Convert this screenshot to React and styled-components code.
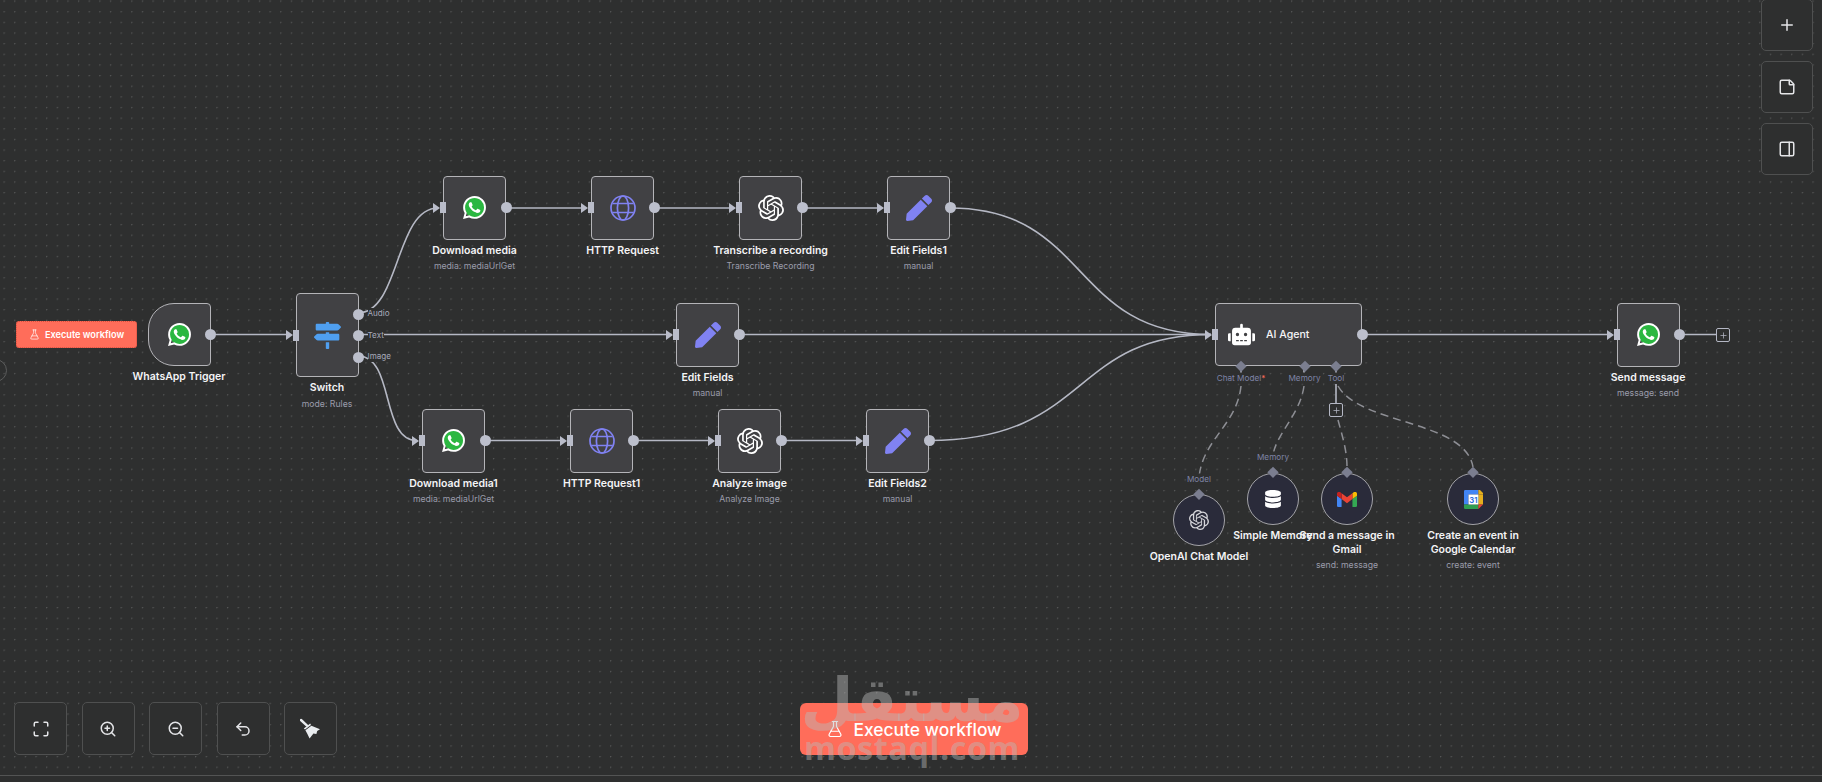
import React from 'react';
import styled, { createGlobalStyle } from 'styled-components';
import { FlaskConical, Plus, StickyNote, PanelRight, Maximize, ZoomIn, ZoomOut, Undo2 } from 'lucide-react';
import { FaMapSigns, FaPen, FaRobot, FaDatabase } from 'react-icons/fa';
import { SiOpenai } from 'react-icons/si';

const Global = createGlobalStyle`
  html, body { margin: 0; height: 100%; background: #2e2f2f; overflow: hidden; }
  body { font-family: Inter, "Liberation Sans", sans-serif; }
  #root { height: 100%; }
`;

const Page = styled.div`
  height: 782px;
  display: flex;
  flex-direction: column;
`;
const Canvas = styled.main`
  position: relative;
  height: 775px;
  flex: none;
  overflow: hidden;
  border-bottom: 1px solid #535454;
  background-color: #2e2f2f;
  background-image: radial-gradient(circle at 0.6px 0.6px, #565757 0.6px, transparent 1px);
  background-size: 10.65px 10.65px;
  background-position: 3.5px 0.5px;
`;
const Edges = styled.svg`
  position: absolute;
  inset: 0;
  width: 100%;
  height: 100%;
  fill: none;
`;
const NodeWrap = styled.div`
  position: absolute;
  left: ${p => p.$x}px;
  top: ${p => p.$y}px;
  width: ${p => p.$w}px;
  display: flex;
  flex-direction: column;
  align-items: center;
`;
const Box = styled.div`
  position: relative;
  box-sizing: border-box;
  flex: none;
  width: ${p => p.$w}px;
  height: ${p => p.$h}px;
  background: #414144;
  border: 1.5px solid #b4b4b8;
  border-radius: ${p => (p.$trigger ? '26px 4px 4px 26px' : '4px')};
  display: flex;
  align-items: center;
  justify-content: ${p => (p.$agent ? 'flex-start' : 'center')};
  padding-left: ${p => (p.$agent ? 12 : 0)}px;
  gap: 11px;
`;
const Round = styled.div`
  position: relative;
  box-sizing: border-box;
  flex: none;
  width: 52px;
  height: 52px;
  background: #2a2b3a;
  border: 1.5px solid #a3a3a8;
  border-radius: 50%;
  display: flex;
  align-items: center;
  justify-content: center;
`;
const Title = styled.div`
  margin-top: ${p => p.$gap ?? 4}px;
  width: ${p => (p.$wrap ? `${p.$wrap}px` : 'max-content')};
  font-size: 10.5px;
  line-height: 13.5px;
  font-weight: 600;
  color: #f4f4f6;
  text-align: center;
`;
const Sub = styled.div`
  margin-top: 3px;
  white-space: nowrap;
  font-size: 8.7px;
  line-height: 12px;
  color: #9a9cab;
`;
const AgentName = styled.span`
  font-size: 10.6px;
  font-weight: 500;
  color: #f4f4f6;
`;
const OutPort = styled.span`
  position: absolute;
  right: -6.5px;
  top: ${p => p.$top ?? 'calc(50% - 5.5px)'};
  width: 11px;
  height: 11px;
  border-radius: 50%;
  background: #bcbfcc;
`;
const InPort = styled.span`
  position: absolute;
  left: -4px;
  top: calc(50% - 5.5px);
  width: 6px;
  height: 11px;
  background: #b9bcc9;
  &::before {
    content: '';
    position: absolute;
    left: -7px;
    top: 0.5px;
    border-left: 7px solid #b9bcc9;
    border-top: 5px solid transparent;
    border-bottom: 5px solid transparent;
  }
`;
const PortLabel = styled.span`
  position: absolute;
  left: 71px;
  top: ${p => p.$top}px;
  font-size: 8.1px;
  line-height: 11px;
  color: #a7aabb;
  white-space: nowrap;
  background: #2e2f2f;
`;
const Diamond = styled.span`
  position: absolute;
  left: ${p => p.$x}px;
  top: ${p => p.$y}px;
  width: 7.5px;
  height: 7.5px;
  transform: translate(-50%, -50%) rotate(45deg);
  background: #7b7e90;
`;
const SlotLabel = styled.span`
  position: absolute;
  left: ${p => p.$x}px;
  top: ${p => p.$y}px;
  transform: translate(-50%, -50%);
  font-size: 8.2px;
  line-height: 11px;
  color: #7f84a6;
  white-space: nowrap;
  background: #2e2f2f;
`;
const Star = styled.span`
  color: #ff6d5a;
`;
const AddBox = styled.span`
  position: absolute;
  left: ${p => p.$x}px;
  top: ${p => p.$y}px;
  box-sizing: border-box;
  width: 14px;
  height: 14px;
  border: 1.2px solid #b4b7c4;
  border-radius: 2px;
  background: #2e2f2f;
  color: #b4b7c4;
  display: flex;
  align-items: center;
  justify-content: center;
`;
const ExecuteSmall = styled.button`
  position: absolute;
  left: 16px;
  top: 321px;
  width: 121px;
  height: 27px;
  padding: 0;
  border: 1px dotted #d9503f;
  border-radius: 3px;
  background: #ff6d5a;
  color: #fff;
  font: 600 9.2px Inter, sans-serif;
  display: flex;
  align-items: center;
  justify-content: center;
  gap: 5px;
`;
const SideToggle = styled.span`
  position: absolute;
  left: -16px;
  top: 359px;
  width: 21px;
  height: 21px;
  border: 1px solid #5b5c5c;
  border-radius: 50%;
`;
const Rail = styled.div`
  position: absolute;
  right: 9px;
  top: -1px;
  display: flex;
  flex-direction: column;
  gap: 10px;
`;
const Tools = styled.div`
  position: absolute;
  left: 14px;
  top: 702px;
  display: flex;
  gap: 14.5px;
`;
const ToolButton = styled.button`
  box-sizing: border-box;
  width: ${p => p.$w || 53}px;
  height: ${p => p.$h || 53}px;
  padding: 0;
  border: 1px solid #4f5050;
  border-radius: 5px;
  background: #2e2f2f;
  color: #e4e5e8;
  display: flex;
  align-items: center;
  justify-content: center;
`;
const ExecuteLarge = styled.button`
  position: absolute;
  left: 800px;
  top: 703px;
  width: 228px;
  height: 52px;
  padding: 0;
  border: none;
  border-radius: 6px;
  background: #ff6d5a;
  color: #fff;
  font: 500 17.4px Inter, sans-serif;
  display: flex;
  align-items: center;
  justify-content: center;
  gap: 9px;
`;
const Watermark = styled.div`
  position: absolute;
  left: 805px;
  top: 665px;
  width: 214px;
  display: flex;
  flex-direction: column;
  align-items: center;
  color: rgba(185, 185, 185, 0.46);
  pointer-events: none;
`;
const WatermarkArabic = styled.div`
  font: 700 61px/70px "DejaVu Sans", sans-serif;
  direction: rtl;
  white-space: nowrap;
`;
const WatermarkLatin = styled.div`
  margin-top: -4px;
  font: 700 32.5px/34px "Open Sans", sans-serif;
  letter-spacing: 0.5px;
`;
const Footer = styled.div`
  flex: 1;
  background: #2e2f2f;
`;

const WhatsApp = ({ size = 23 }) => (
  <svg width={size} height={size} viewBox="0 0 24 24">
    <circle cx="12" cy="12" r="10.4" fill="#2bb741" />
    <path fill="#fff" d="M17.472 14.382c-.297-.149-1.758-.867-2.03-.967-.273-.099-.471-.148-.67.15-.197.297-.767.966-.94 1.164-.173.199-.347.223-.644.075-.297-.15-1.255-.463-2.39-1.475-.883-.788-1.48-1.761-1.653-2.059-.173-.297-.018-.458.13-.606.134-.133.298-.347.446-.52.149-.174.198-.298.298-.497.099-.198.05-.371-.025-.52-.075-.149-.669-1.612-.916-2.207-.242-.579-.487-.5-.669-.51-.173-.008-.371-.01-.57-.01-.198 0-.52.074-.792.372-.272.297-1.04 1.016-1.04 2.479 0 1.462 1.065 2.875 1.213 3.074.149.198 2.096 3.2 5.077 4.487.709.306 1.262.489 1.694.625.712.227 1.36.195 1.871.118.571-.085 1.758-.719 2.006-1.413.248-.694.248-1.289.173-1.413-.074-.124-.272-.198-.57-.347m-5.421 7.403h-.004a9.87 9.87 0 01-5.031-1.378l-.361-.214-3.741.982.998-3.648-.235-.374a9.86 9.86 0 01-1.51-5.26c.001-5.45 4.436-9.884 9.888-9.884 2.64 0 5.122 1.03 6.988 2.898a9.825 9.825 0 012.893 6.994c-.003 5.45-4.437 9.884-9.885 9.884m8.413-18.297A11.815 11.815 0 0012.05 0C5.495 0 .16 5.335.157 11.892c0 2.096.547 4.142 1.588 5.945L.057 24l6.305-1.654a11.882 11.882 0 005.683 1.448h.005c6.554 0 11.89-5.335 11.893-11.893a11.821 11.821 0 00-3.48-8.413z" />
  </svg>
);
const Globe = () => (
  <svg width="26" height="26" viewBox="0 0 26 26" fill="none" stroke="#8082f2" strokeWidth="1.7">
    <circle cx="13" cy="13" r="12" />
    <ellipse cx="13" cy="13" rx="5.6" ry="12" />
    <path d="M2.5 8.5h21M2.5 17.5h21" />
  </svg>
);
const Gmail = () => (
  <svg width="20" height="15" viewBox="0 0 24 18">
    <path fill="#4285f4" d="M1.6 18H5.5V8.5L0 4.4v12A1.6 1.6 0 0 0 1.6 18z" />
    <path fill="#34a853" d="M18.5 18h3.9a1.6 1.6 0 0 0 1.6-1.6v-12l-5.5 4.1z" />
    <path fill="#fbbc04" d="M18.5 1.4v7.1L24 4.4V2.2c0-2-2.3-3.2-3.9-2z" />
    <path fill="#ea4335" d="M5.5 8.5V1.4L12 6.3l6.5-4.9v7.1L12 13.4z" />
    <path fill="#c5221f" d="M0 2.2v2.2l5.5 4.1V1.4L3.9.2C2.3-1 0 .2 0 2.2z" />
  </svg>
);
const GCal = () => (
  <svg width="19" height="19" viewBox="0 0 19 19">
    <path fill="#4285f4" d="M1.2 0H14.4V4.5H4.5V14.5H0V1.2A1.2 1.2 0 0 1 1.2 0z" />
    <rect x="14.4" y="4.5" width="4.6" height="10" fill="#e6ae1e" />
    <path fill="#2f9e50" d="M0 14.5H14.4V19H1.2A1.2 1.2 0 0 1 0 17.8z" />
    <path fill="#ea4335" d="M14.4 14.5H19L14.4 19z" />
    <path fill="#e6ae1e" d="M14.4 0H16L19 3V4.5H14.4z" />
    <rect x="4.5" y="4.5" width="9.9" height="10" fill="#fff" />
    <text x="9.4" y="12.6" fontSize="7.6" fontWeight="700" fill="#2f6fde" textAnchor="middle" fontFamily="Inter, sans-serif">31</text>
  </svg>
);
const Broom = () => (
  <svg width="21" height="21" viewBox="0 0 21 21" fill="#e9ecef">
    <path d="M1 2L7 7.6" stroke="#e9ecef" strokeWidth="2.4" strokeLinecap="round" />
    <path d="M3.8 10.4L10.2 5.6L11 7L5 11.6Z" />
    <path d="M5.4 12.2L11.4 7.8L20 11.2L17.2 13L16.4 16L13.4 15.6L9.6 20.4L7.4 16Z" />
  </svg>
);
const Pen = () => <FaPen size={26} color="#8082f2" />;
const OpenAI = () => <SiOpenai size={26} color="#fff" />;

const squares = [
  { x: 443, y: 176, label: 'Download media', sub: 'media: mediaUrlGet', icon: <WhatsApp /> },
  { x: 591, y: 176, label: 'HTTP Request', icon: <Globe /> },
  { x: 739, y: 176, label: 'Transcribe a recording', sub: 'Transcribe Recording', icon: <OpenAI /> },
  { x: 887, y: 176, label: 'Edit Fields1', sub: 'manual', icon: <Pen /> },
  { x: 676, y: 303, label: 'Edit Fields', sub: 'manual', icon: <Pen /> },
  { x: 422, y: 409, label: 'Download media1', sub: 'media: mediaUrlGet', icon: <WhatsApp /> },
  { x: 570, y: 409, label: 'HTTP Request1', icon: <Globe /> },
  { x: 718, y: 409, label: 'Analyze image', sub: 'Analyze Image', icon: <OpenAI /> },
  { x: 866, y: 409, label: 'Edit Fields2', sub: 'manual', icon: <Pen /> },
  { x: 1616.5, y: 303, label: 'Send message', sub: 'message: send', icon: <WhatsApp /> },
];

const rounds = [
  { x: 1173, y: 494, label: 'OpenAI Chat Model', icon: <SiOpenai size={20} color="#d6d6da" /> },
  { x: 1247, y: 473, label: 'Simple Memory', icon: <FaDatabase size={18} color="#fff" /> },
  { x: 1321, y: 473, label: 'Send a message in Gmail', wrap: 100, sub: 'send: message', icon: <Gmail /> },
  { x: 1447, y: 473, label: 'Create an event in Google Calendar', wrap: 100, sub: 'create: event', icon: <GCal /> },
];

const solidEdges = [
  'M211 334.5H290',
  'M358 313C400 313 395 208 438 208',
  'M358 334.5H672',
  'M358 356C395 356 380 440.5 417 440.5',
  'M506 208H586', 'M654 208H734', 'M802 208H882',
  'M485 440.5H565', 'M633 440.5H713', 'M781 440.5H861',
  'M950 208C1090 208 1070 334.5 1211 334.5',
  'M739 334.5H1211',
  'M929 440.5C1090 440.5 1070 334.5 1211 334.5',
  'M1362 334.5H1612',
  'M1679 334.5H1716',
  'M1241 370V373', 'M1304 370V373', 'M1336 370V373',
  'M1336 384V403',
];
const dashedEdges = [
  'M1241 386C1237 425 1202 440 1199 478',
  'M1304 386C1300 415 1275 435 1273 456',
  'M1338 420C1342 435 1347 450 1347 467',
  'M1338 386C1360 425 1465 420 1473 467',
];
const diamonds = [
  [1241, 366], [1304.5, 366], [1336, 366],
  [1199, 493.5], [1273, 472], [1347, 472], [1473, 472],
];
const slots = [
  { x: 1304.5, y: 378, t: 'Memory' }, { x: 1336, y: 378, t: 'Tool' },
  { x: 1199, y: 479, t: 'Model' }, { x: 1273, y: 457, t: 'Memory' },
];

export default function App() {
  return (
    <Page>
      <Global />
      <Canvas>
        <Edges>
          {solidEdges.map(d => <path key={d} d={d} stroke="#b5b8c4" strokeWidth="1.6" />)}
          {dashedEdges.map(d => <path key={d} d={d} stroke="#8d8e94" strokeWidth="1.5" strokeDasharray="8 5" />)}
        </Edges>

        <SideToggle />
        <ExecuteSmall><FlaskConical size={11} strokeWidth={1.5} />Execute workflow</ExecuteSmall>

        <NodeWrap $x={147.5} $y={303} $w={63}>
          <Box $w={63} $h={63} $trigger>
            <WhatsApp />
            <OutPort />
          </Box>
          <Title>WhatsApp Trigger</Title>
        </NodeWrap>

        <NodeWrap $x={295.5} $y={293} $w={63}>
          <Box $w={63} $h={84}>
            <InPort />
            <FaMapSigns size={27} color="#4f9ff0" />
            <OutPort $top="14.5px" />
            <OutPort $top="36px" />
            <OutPort $top="57.5px" />
            <PortLabel $top={14}>Audio</PortLabel>
            <PortLabel $top={35.5}>Text</PortLabel>
            <PortLabel $top={57}>Image</PortLabel>
          </Box>
          <Title>Switch</Title>
          <Sub>mode: Rules</Sub>
        </NodeWrap>

        {squares.map(n => (
          <NodeWrap key={n.label} $x={n.x} $y={n.y} $w={63}>
            <Box $w={63} $h={63.5}>
              <InPort />
              {n.icon}
              <OutPort />
            </Box>
            <Title>{n.label}</Title>
            {n.sub && <Sub>{n.sub}</Sub>}
          </NodeWrap>
        ))}

        <NodeWrap $x={1215} $y={303} $w={147}>
          <Box $w={147} $h={63} $agent>
            <InPort />
            <FaRobot size={27} color="#fff" />
            <AgentName>AI Agent</AgentName>
            <OutPort />
          </Box>
        </NodeWrap>

        {rounds.map(n => (
          <NodeWrap key={n.label} $x={n.x} $y={n.y} $w={52}>
            <Round>{n.icon}</Round>
            <Title $wrap={n.wrap} $gap={4}>{n.label}</Title>
            {n.sub && <Sub>{n.sub}</Sub>}
          </NodeWrap>
        ))}

        {diamonds.map(([x, y]) => <Diamond key={`${x}-${y}`} $x={x} $y={y} />)}
        <SlotLabel $x={1241} $y={378}>Chat Model<Star>*</Star></SlotLabel>
        {slots.map(s => <SlotLabel key={`${s.x}-${s.y}`} $x={s.x} $y={s.y}>{s.t}</SlotLabel>)}
        <AddBox $x={1329} $y={403}><Plus size={9} /></AddBox>
        <AddBox $x={1716} $y={328}><Plus size={9} /></AddBox>

        <Rail>
          <ToolButton $w={52} $h={52}><Plus size={18} /></ToolButton>
          <ToolButton $w={52} $h={52}><StickyNote size={18} /></ToolButton>
          <ToolButton $w={52} $h={52}><PanelRight size={18} /></ToolButton>
        </Rail>

        <Tools>
          <ToolButton><Maximize size={18} /></ToolButton>
          <ToolButton><ZoomIn size={18} /></ToolButton>
          <ToolButton><ZoomOut size={18} /></ToolButton>
          <ToolButton><Undo2 size={18} /></ToolButton>
          <ToolButton><Broom /></ToolButton>
        </Tools>

        <ExecuteLarge><FlaskConical size={18} strokeWidth={1.6} />Execute workflow</ExecuteLarge>

        <Watermark>
          <WatermarkArabic>مستقل</WatermarkArabic>
          <WatermarkLatin>mostaql.com</WatermarkLatin>
        </Watermark>
      </Canvas>
      <Footer />
    </Page>
  );
}
